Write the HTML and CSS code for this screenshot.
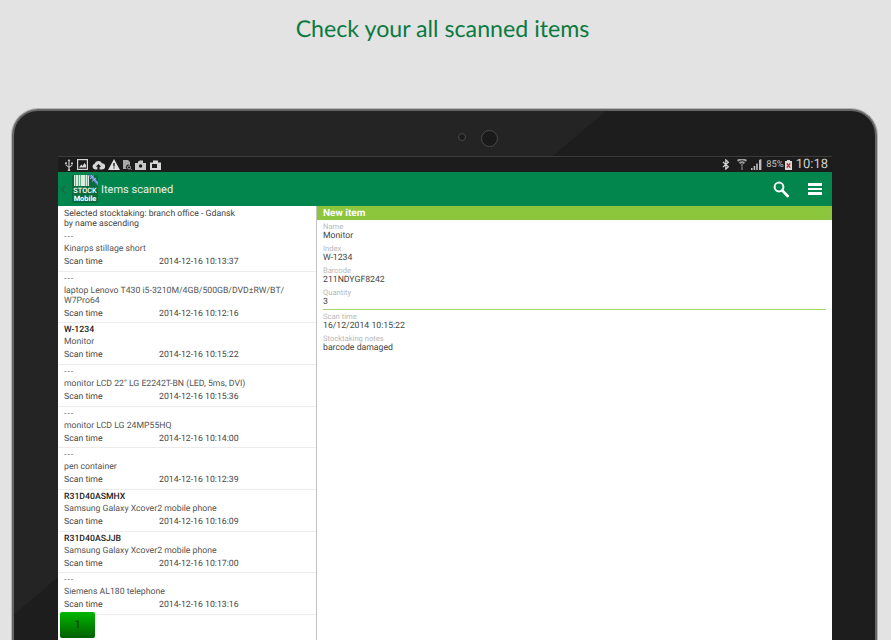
FILE: index.html
```html
<!DOCTYPE html>
<html lang="en">
<head>
<meta charset="utf-8">
<title>Check your all scanned items</title>
<link rel="stylesheet" href="styles.css">
</head>
<body>
<h1 class="headline">Check your all scanned items</h1>
<div class="tablet">
  <div class="camera">
    <span class="sensor"></span>
    <span class="lens"></span>
  </div>
  <div class="screen">
    <div class="statusbar">
      <div class="status-left">
        <svg class="si" width="10" height="12" viewBox="0 0 10 12"><path d="M5 0 6.5 2H5.6V7.6L7.6 6V5H7V3.4H9V5H8.4V6.4L5.6 8.8V10a1.2 1.2 0 1 1-1.2 0V8.6L1.6 6.2V5A1 1 0 1 1 2.4 5V5.8L4.4 7.4V2H3.5Z" fill="#c4c4c4"/></svg>
        <svg class="si" width="11" height="11" viewBox="0 0 11 11"><rect x=".6" y=".6" width="9.8" height="9.8" fill="none" stroke="#d6d6d6" stroke-width="1.2"/><path d="M2 8.6 4.2 5.6 5.6 7 7.4 4 9 6V8.6Z" fill="#d6d6d6"/></svg>
        <svg class="si" width="13" height="10" viewBox="0 0 13 10"><path d="M3 9.6A3 3 0 0 1 2.6 3.8 4 4 0 0 1 10 3.2 3.2 3.2 0 0 1 10 9.6H7.6V6.8H9.2L6.5 4 3.8 6.8H5.4V9.6Z" fill="#d6d6d6"/></svg>
        <svg class="si" width="12" height="11" viewBox="0 0 12 11"><path d="M6 0 12 11H0ZM5.3 4V7.6H6.7V4ZM5.3 8.4V9.6H6.7V8.4Z" fill="#e0e0e0" fill-rule="evenodd"/></svg>
        <svg class="si" width="9" height="10" viewBox="0 0 9 10"><path d="M0 0H5L7 2V5.4A2.4 2.4 0 0 0 3.6 9H0Z" fill="#a8a8a8"/><circle cx="6" cy="7.4" r="1.6" fill="none" stroke="#a8a8a8"/><path d="M7.2 8.6 8.6 10" stroke="#a8a8a8"/></svg>
        <svg class="si" width="11" height="10" viewBox="0 0 11 10"><path d="M0 3H3V1.6L5 .6H8V3H11V10H0Z" fill="#c8c8c8"/><circle cx="5.6" cy="6" r="1.7" fill="#1c1c1c"/></svg>
        <svg class="si" width="11" height="10" viewBox="0 0 11 10"><path d="M0 2.4H3V.6H8V2.4H11V10H0Z" fill="#d6d6d6"/><rect x="2" y="4" width="5" height="4" fill="#1c1c1c"/></svg>
      </div>
      <div class="status-right">
        <svg class="sr" width="8" height="11" viewBox="0 0 8 11"><path d="M1 3 6.4 7.8 3.8 10.2V.8L6.4 3.2 1 8" fill="none" stroke="#d4d4d4" stroke-width="1.2"/></svg>
        <svg class="sr gap-wifi" width="10" height="11" viewBox="0 0 10 11"><path d="M0 1.2A7 7 0 0 1 10 1.2L8.8 2.8A5.4 5.4 0 0 0 1.2 2.8ZM2 3.6A4.4 4.4 0 0 1 8 3.6L6.9 5A3 3 0 0 0 3.1 5ZM3.8 5.8A1.8 1.8 0 0 1 6.2 5.8L5 7.2Z" fill="#9c9c9c"/><path d="M5 7.4V11" stroke="#9c9c9c"/></svg>
        <svg class="sr gap-signal" width="11" height="11" viewBox="0 0 11 11"><path d="M0 11V9H1.6V11ZM2.6 11V7H4.2V11ZM5.2 11V4.6H6.8V11ZM8 11V1L10.4 0V11Z" fill="#bcbcbc"/></svg>
        <span class="pct">85%</span>
        <svg class="sr" width="7" height="10" viewBox="0 0 7 10"><path d="M2 0H5V1H7V10H0V1H2Z" fill="#d8d8d8"/><path d="M1.8 3.4 5.2 7.6M5.2 3.4 1.8 7.6" stroke="#c62020" stroke-width="1.3"/></svg>
        <span class="clock">10:18</span>
      </div>
    </div>

    <div class="appbar">
      <svg class="back" width="5" height="9" viewBox="0 0 5 9"><path d="M4 .5 1 4.5 4 8.5" fill="none" stroke="#1e6a45" stroke-width="1.4"/></svg>
      <div class="logo">
        <svg class="barcode" width="26" height="11" viewBox="0 0 26 11">
          <rect x="2" width="15" height="11" fill="#6fae8a"/>
          <path d="M2 0H3V11H2ZM4 0H6V11H4ZM7 0H8V11H7ZM9 0H13V11H9ZM14 0H15V11H14ZM16 0H17V11H16Z" fill="#d8ece0"/>
          <path d="M16 0H20L26 7V11Z" fill="#5d7fd0"/>
          <path d="M19 0 26 8.6M22 .5 18 4M24 3 20 6.5" stroke="#b8c8ee" stroke-width=".8"/>
        </svg>
        <span class="logo-stock">STOCK</span>
        <span class="logo-mobile">Mobile</span>
      </div>
      <span class="appbar-title">Items scanned</span>
      <svg class="action-search" width="16" height="17" viewBox="0 0 16 17"><circle cx="6" cy="6" r="4.4" fill="none" stroke="#fff" stroke-width="2"/><path d="M9.4 9.6 14.6 15" stroke="#fff" stroke-width="2.8" stroke-linecap="round"/></svg>
      <span class="action-menu"><i></i><i></i><i></i></span>
    </div>

    <div class="content">
      <div class="list">
        <div class="list-head">
          <div>Selected stocktaking: branch office - Gdansk</div>
          <div>by name ascending</div>
        </div>
        <div class="row">
          <div class="code muted">---</div>
          <div class="name">Kinarps stillage short</div>
          <div class="time"><span>Scan time</span><span>2014-12-16 10:13:37</span></div>
        </div>
        <div class="row">
          <div class="code muted">---</div>
          <div class="name">laptop Lenovo T430 i5-3210M/4GB/500GB/DVD±RW/BT/<br>W7Pro64</div>
          <div class="time"><span>Scan time</span><span>2014-12-16 10:12:16</span></div>
        </div>
        <div class="row">
          <div class="code">W-1234</div>
          <div class="name">Monitor</div>
          <div class="time"><span>Scan time</span><span>2014-12-16 10:15:22</span></div>
        </div>
        <div class="row">
          <div class="code muted">---</div>
          <div class="name">monitor LCD 22" LG E2242T-BN (LED, 5ms, DVI)</div>
          <div class="time"><span>Scan time</span><span>2014-12-16 10:15:36</span></div>
        </div>
        <div class="row">
          <div class="code muted">---</div>
          <div class="name">monitor LCD LG 24MP55HQ</div>
          <div class="time"><span>Scan time</span><span>2014-12-16 10:14:00</span></div>
        </div>
        <div class="row">
          <div class="code muted">---</div>
          <div class="name">pen container</div>
          <div class="time"><span>Scan time</span><span>2014-12-16 10:12:39</span></div>
        </div>
        <div class="row">
          <div class="code">R31D40ASMHX</div>
          <div class="name">Samsung Galaxy Xcover2 mobile phone</div>
          <div class="time"><span>Scan time</span><span>2014-12-16 10:16:09</span></div>
        </div>
        <div class="row">
          <div class="code">R31D40ASJJB</div>
          <div class="name">Samsung Galaxy Xcover2 mobile phone</div>
          <div class="time"><span>Scan time</span><span>2014-12-16 10:17:00</span></div>
        </div>
        <div class="row">
          <div class="code muted">---</div>
          <div class="name">Siemens AL180 telephone</div>
          <div class="time"><span>Scan time</span><span>2014-12-16 10:13:16</span></div>
        </div>
        <div class="page-btn">1</div>
      </div>
      <div class="detail">
        <div class="detail-head">New item</div>
        <div class="fields">
          <div class="field"><div class="label">Name</div><div class="value">Monitor</div></div>
          <div class="field"><div class="label">Index</div><div class="value">W-1234</div></div>
          <div class="field"><div class="label">Barcode</div><div class="value">211NDYGF8242</div></div>
          <div class="field"><div class="label">Quantity</div><div class="value">3</div></div>
          <div class="rule"></div>
          <div class="field"><div class="label">Scan time</div><div class="value">16/12/2014 10:15:22</div></div>
          <div class="field"><div class="label">Stocktaking notes</div><div class="value">barcode damaged</div></div>
        </div>
      </div>
    </div>
  </div>
</div>
</body>
</html>
```
FILE: styles.css
```css
* { box-sizing: border-box; }
html, body { margin: 0; height: 640px; overflow: hidden; }
body {
  background: #e2e3e2;
  font-family: Roboto, "Open Sans", sans-serif;
  color: #444;
  text-rendering: geometricPrecision;
}
.headline {
  margin: 0;
  height: 109px;
  padding: 13px 6px 0 0;
  text-align: center;
  font-family: Lato, "Open Sans", sans-serif;
  font-size: 23.2px;
  line-height: 30px;
  font-weight: 400;
  color: #0b7a43;
}
.tablet {
  margin: 0 14px 0 12px;
  height: 560px;
  padding: 0 43px 0 44px;
  background: linear-gradient(139.6deg, #242424 39%, #1d1d1d 39%);
  border: solid #666;
  border-width: 2px 2px 0 2px;
  border-radius: 26px 26px 0 0;
  box-shadow: 0 0 0 1px #b4b4b4;
}
.camera {
  height: 45px;
  display: flex;
  align-items: center;
  justify-content: center;
  gap: 15px;
  padding: 9px 4px 0 70px;
}
.sensor { width: 8px; height: 8px; margin-bottom: 3px; border-radius: 50%; background: #1c1c1c; border: 1px solid #484848; }
.lens { width: 17px; height: 17px; border-radius: 50%; background: #1a1a1a; border: 1.5px solid #4a4a4a; }
.screen { height: 484px; display: flex; flex-direction: column; }
.statusbar {
  height: 16px;
  flex: none;
  background: #1c1c1c;
  border-top: 1px solid #3a3a3a;
  display: flex;
  justify-content: space-between;
  align-items: center;
  padding: 0 4px 0 6px;
}
.status-left { display: flex; align-items: center; gap: 3.3px; }
.status-right { display: flex; align-items: center; gap: 1px; }
.si, .sr { display: block; }
.gap-wifi { margin-left: 6px; }
.gap-signal { margin-left: 3px; }
.pct { font-size: 9.4px; line-height: 14px; color: #c8c8c8; margin-left: 3px; }
.clock { font-size: 13px; line-height: 15px; color: #cfcfcf; margin-left: 3px; }
.appbar {
  height: 34px;
  flex: none;
  background: #03854e;
  display: flex;
  align-items: center;
  padding-left: 3px;
}
.back { display: block; }
.logo {
  width: 26px;
  height: 28px;
  margin-left: 6px;
  background: #0a6a3e;
  border-radius: 2px;
  display: flex;
  flex-direction: column;
  align-items: center;
  color: #fff;
  font-weight: 700;
  overflow: hidden;
}
.barcode { display: block; flex: none; }
.logo-stock { font-size: 7.4px; line-height: 8px; font-weight: 500; margin-top: 1px; }
.logo-mobile { font-size: 7.4px; line-height: 7px; }
.appbar-title {
  margin-left: 3px;
  padding-top: 1px;
  font-size: 11px;
  line-height: 14px;
  color: #e4f1ea;
  flex: 1;
}
.action-search { display: block; margin-right: 19px; }
.action-menu { display: flex; flex-direction: column; gap: 2px; width: 14px; margin-right: 10px; }
.action-menu i { display: block; height: 2.6px; background: #fff; }
.content { flex: 1; display: flex; min-height: 0; background: #fff; }
.list {
  width: 259px;
  flex: none;
  position: relative;
  border-right: 1px solid #c2c2c2;
  font-size: 8.7px;
  line-height: 10px;
  overflow: hidden;
}
.list-head { padding: 3px 0 0 6px; height: 24px; }
.row {
  padding: 2px 0 0 6px;
  border-bottom: 1px solid #ececec;
}
.row .code { height: 11px; line-height: 11px; font-weight: 500; color: #222; }
.row .code.muted { font-weight: 400; color: #777; letter-spacing: 1px; }
.row .name { padding-top: 1px; min-height: 11px; color: #555; }
.row .time { display: flex; line-height: 14px; height: 16.67px; padding-top: 1px; color: #444; }
.row .time span:first-child { width: 95px; }
.page-btn {
  position: absolute;
  left: 2px;
  bottom: 2px;
  width: 35px;
  height: 26px;
  border-radius: 2px;
  background: linear-gradient(#00b800, #005f00);
  text-align: center;
  line-height: 26px;
  font-size: 11px;
  color: #0d2a0d;
}
.detail { flex: 1; min-width: 0; }
.detail-head {
  height: 14px;
  background: #8cc63c;
  color: #fff;
  font-size: 10px;
  font-weight: 700;
  line-height: 16px;
  padding-left: 6px;
}
.fields { padding: 3px 6px 0; }
.field { height: 22px; }
.label { font-size: 7.6px; line-height: 8px; height: 9px; color: #b8b8b8; }
.value { font-size: 8.7px; line-height: 9px; color: #444; }
.rule { position: relative; height: 1px; background: #a3d86a; margin: -2px 0 3px; }
```
